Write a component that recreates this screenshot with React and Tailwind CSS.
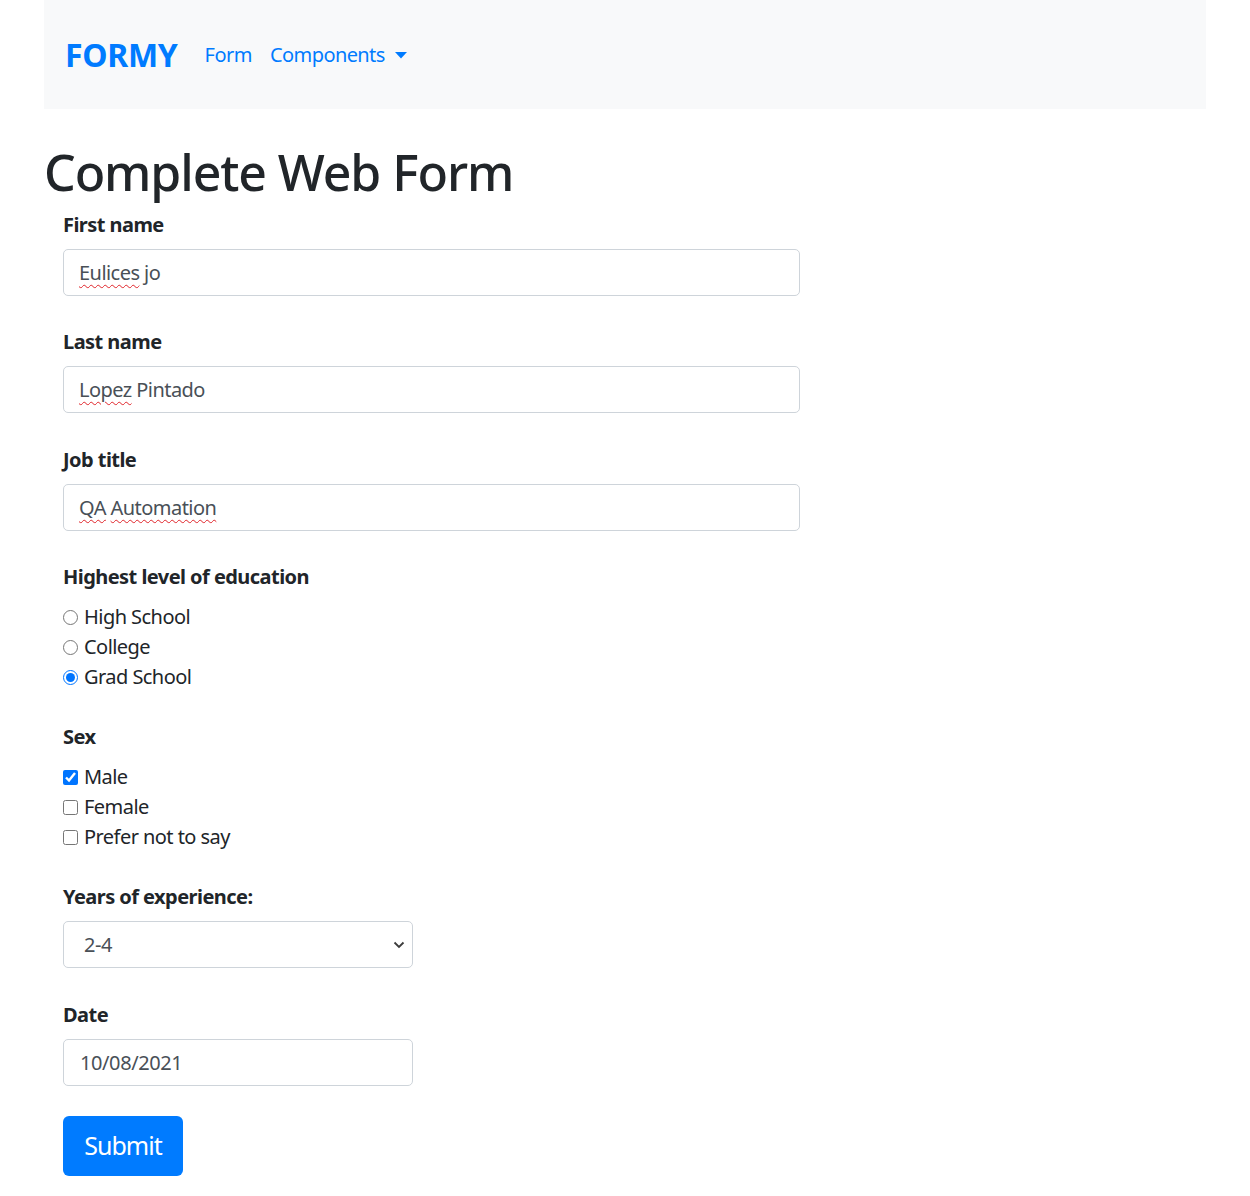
export default function App() {
  const label = "block h-[30px] leading-[30px] text-[20px] font-bold tracking-[-0.55px] text-[#212529]";
  const inputBox =
    "h-[47px] w-[737px] rounded-[5px] border border-[#ced4da] bg-white pl-[15px] flex items-center text-[20px] tracking-[-0.55px] text-[#495057]";
  const squiggle = "underline decoration-wavy decoration-[#e0242a] decoration-[1px] underline-offset-[4px]";
  return (
    <div className="min-h-[1196px] bg-white font-['Noto_Sans',sans-serif] text-[#212529]">
      <div className="mx-auto w-[1162px]">
        <nav className="flex h-[109px] items-center bg-[#f8f9fa] pl-[21px]">
          <span className="text-[32px] font-bold tracking-[-0.3px] text-[#007bff]">FORMY</span>
          <span className="ml-[27px] text-[20px] tracking-[-0.5px] text-[#007bff]">Form</span>
          <span className="ml-[18px] flex items-center text-[20px] tracking-[-0.6px] text-[#007bff]">
            Components
            <svg className="ml-[10px] mt-[1px]" width="12" height="7" viewBox="0 0 12 7">
              <path d="M0 0 L12 0 L6 6.5 Z" fill="#007bff" />
            </svg>
          </span>
        </nav>

        <h1 className="mt-[33px] h-[60px] text-[50px] font-medium leading-[60px] tracking-[-1.1px] text-[#212529]">
          Complete Web Form
        </h1>

        <form className="pl-[19px]">
          <label className={`${label} mt-[8px]`}>First name</label>
          <div className={`${inputBox} mt-[9px]`}>
            <span className={squiggle}>Eulices</span>
            <span>&nbsp;jo</span>
          </div>

          <label className={`${label} mt-[31px]`}>Last name</label>
          <div className={`${inputBox} mt-[9px]`}>
            <span className={squiggle}>Lopez</span>
            <span>&nbsp;Pintado</span>
          </div>

          <label className={`${label} mt-[32px]`}>Job title</label>
          <div className={`${inputBox} mt-[9px]`}>
            <span className={squiggle}>QA</span>
            <span>&nbsp;</span>
            <span className={squiggle}>Automation</span>
          </div>

          <label className={`${label} mt-[31px]`}>Highest level of education</label>
          <div className="mt-[10px] flex flex-col">
            {[
              ["High School", false],
              ["College", false],
              ["Grad School", true],
            ].map(([t, c]) => (
              <div key={t} className="flex h-[30px] items-center">
                <input
                  type="radio"
                  name="edu"
                  defaultChecked={c}
                  className="m-0 h-[15px] w-[15px] accent-[#0075ff]"
                />
                <span className="ml-[6px] text-[20px] tracking-[-0.55px] text-[#212529]">{t}</span>
              </div>
            ))}
          </div>

          <label className={`${label} mt-[30px]`}>Sex</label>
          <div className="mt-[10px] flex flex-col">
            {[
              ["Male", true],
              ["Female", false],
              ["Prefer not to say", false],
            ].map(([t, c]) => (
              <div key={t} className="flex h-[30px] items-center">
                <input
                  type="checkbox"
                  defaultChecked={c}
                  className="m-0 h-[15px] w-[15px] accent-[#0075ff]"
                />
                <span className="ml-[6px] text-[20px] tracking-[-0.55px] text-[#212529]">{t}</span>
              </div>
            ))}
          </div>

          <label className={`${label} mt-[30px]`}>Years of experience:</label>
          <div className="mt-[9px] flex h-[47px] w-[350px] items-center justify-between rounded-[5px] border border-[#ced4da] bg-white pl-[20px] pr-[7px] text-[20px] tracking-[-0.5px] text-[#495057]">
            <span>2-4</span>
            <svg width="12" height="8" viewBox="0 0 12 8">
              <path d="M1.5 1.5 L6 6 L10.5 1.5" fill="none" stroke="#3c3c3c" strokeWidth="1.8" />
            </svg>
          </div>

          <label className={`${label} mt-[32px]`}>Date</label>
          <div className="mt-[9px] flex h-[47px] w-[350px] items-center rounded-[5px] border border-[#ced4da] bg-white pl-[16px] text-[20px] tracking-[-0.4px] text-[#495057]">
            10/08/2021
          </div>

          <button
            type="button"
            className="mt-[30px] flex h-[60px] w-[120px] items-center justify-center rounded-[6px] bg-[#007bff] text-[25px] tracking-[-1px] text-white"
          >
            Submit
          </button>
        </form>
      </div>
    </div>
  );
}
